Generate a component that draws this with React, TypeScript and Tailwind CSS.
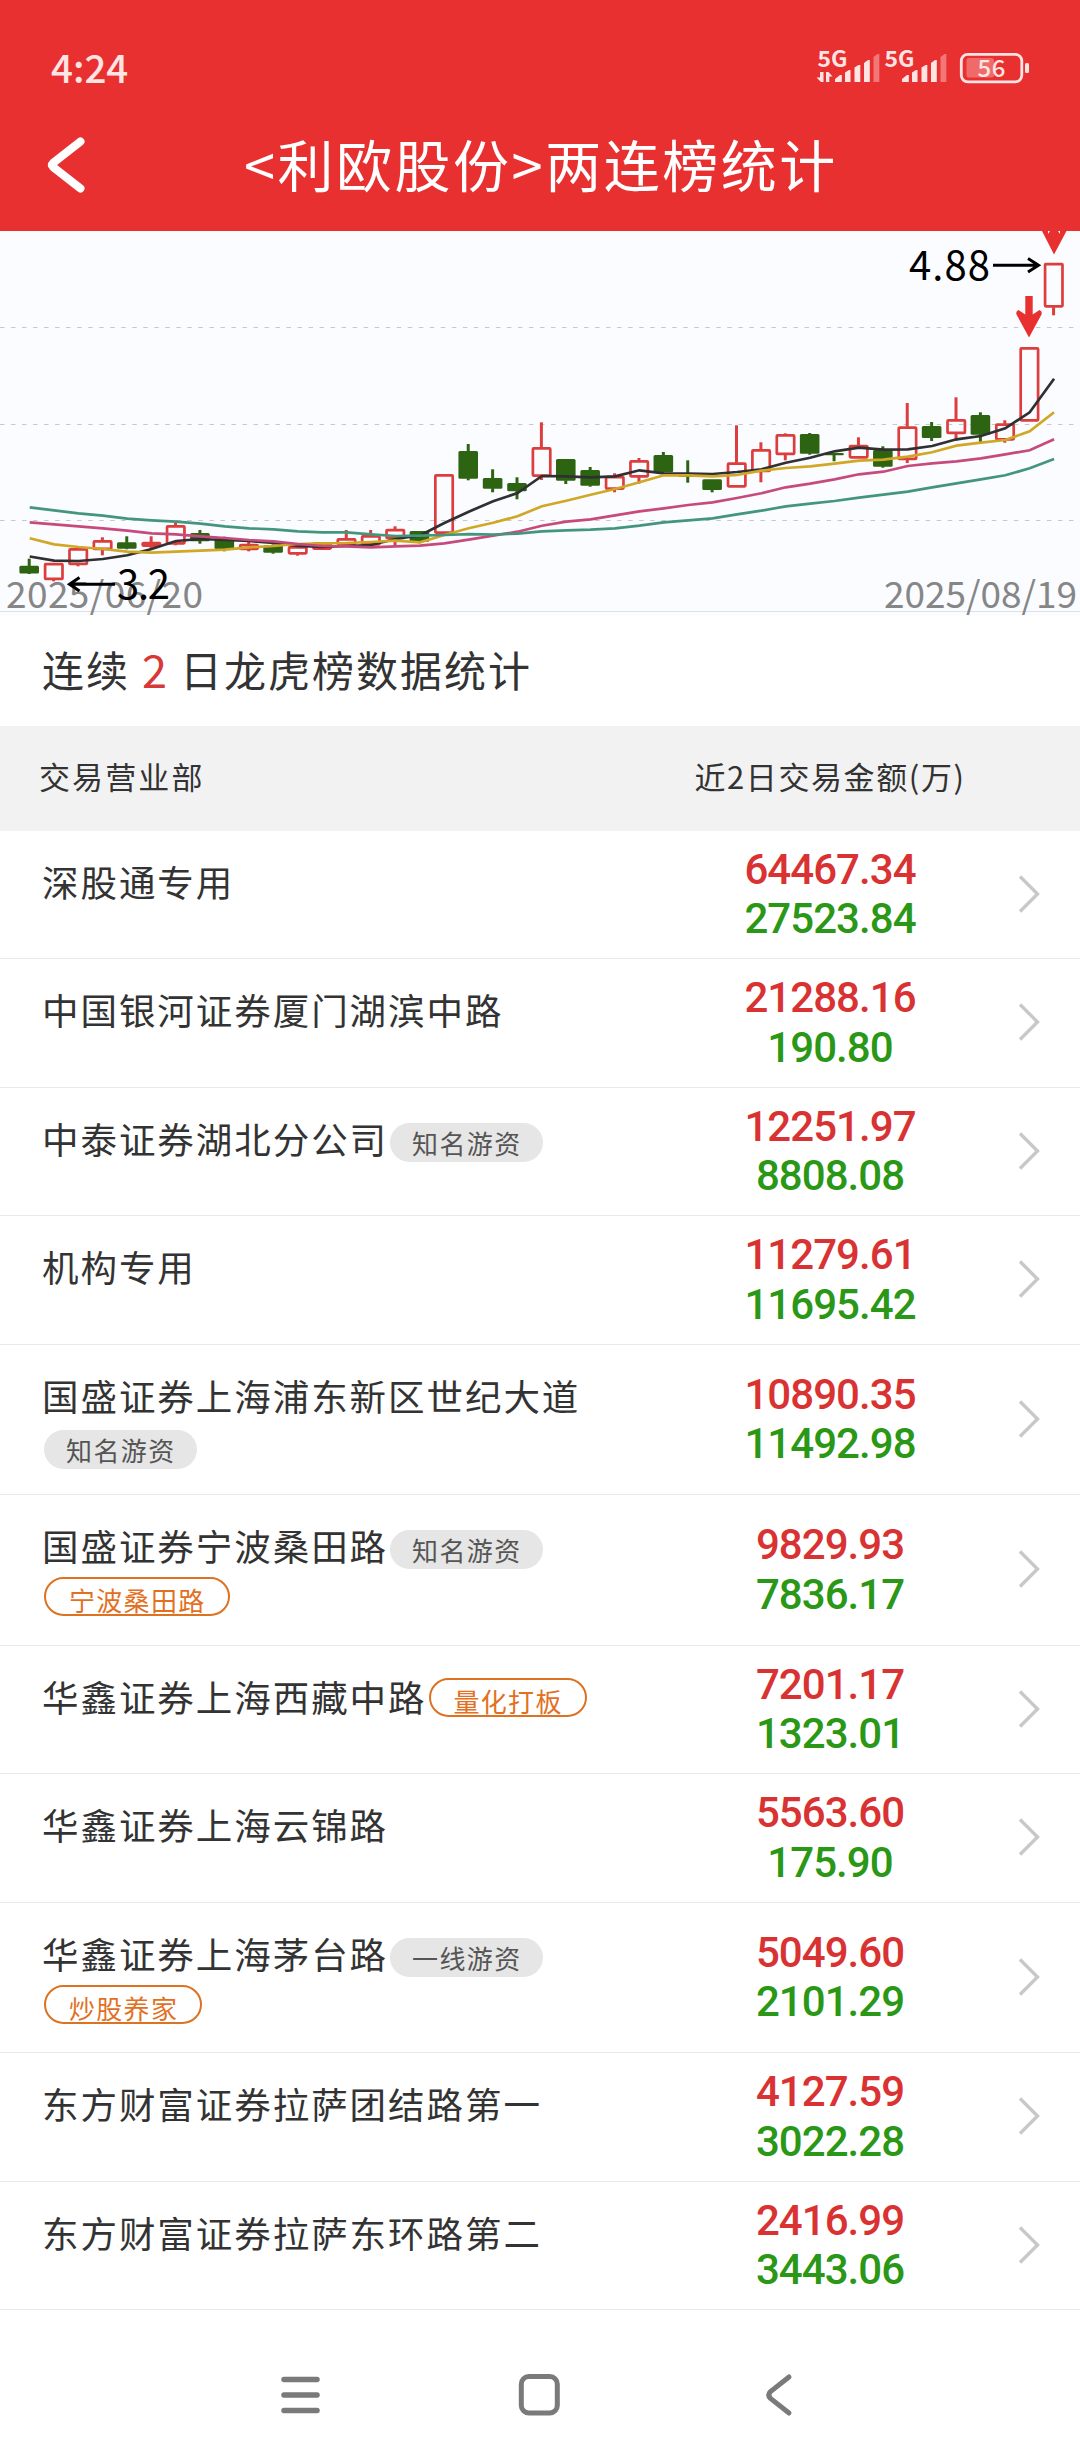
type Tag = { text: string; kind: "gray" | "orange" };
type Row = { name: string; inline?: Tag; below?: Tag; buy: string; sell: string; h: string };

const rows: Row[] = [
  { name: "深股通专用", buy: "64467.34", sell: "27523.84", h: "h-[128px]" },
  { name: "中国银河证券厦门湖滨中路", buy: "21288.16", sell: "190.80", h: "h-[129px]" },
  { name: "中泰证券湖北分公司", inline: { text: "知名游资", kind: "gray" }, buy: "12251.97", sell: "8808.08", h: "h-[128px]" },
  { name: "机构专用", buy: "11279.61", sell: "11695.42", h: "h-[129px]" },
  { name: "国盛证券上海浦东新区世纪大道", below: { text: "知名游资", kind: "gray" }, buy: "10890.35", sell: "11492.98", h: "h-[150px]" },
  { name: "国盛证券宁波桑田路", inline: { text: "知名游资", kind: "gray" }, below: { text: "宁波桑田路", kind: "orange" }, buy: "9829.93", sell: "7836.17", h: "h-[151px]" },
  { name: "华鑫证券上海西藏中路", inline: { text: "量化打板", kind: "orange" }, buy: "7201.17", sell: "1323.01", h: "h-[128px]" },
  { name: "华鑫证券上海云锦路", buy: "5563.60", sell: "175.90", h: "h-[129px]" },
  { name: "华鑫证券上海茅台路", inline: { text: "一线游资", kind: "gray" }, below: { text: "炒股养家", kind: "orange" }, buy: "5049.60", sell: "2101.29", h: "h-[150px]" },
  { name: "东方财富证券拉萨团结路第一", buy: "4127.59", sell: "3022.28", h: "h-[129px]" },
  { name: "东方财富证券拉萨东环路第二", buy: "2416.99", sell: "3443.06", h: "h-[128px]" },
];

// [rising, body top, body bottom, high, low]
const candles: [number, number, number, number, number][] = [
  [0, 565.7, 573.5, 558.7, 574], [1, 562.7, 580.3, 562.7, 581.3], [1, 548, 565.3, 548, 566.3], [1, 540, 550.3, 537.3, 555.3],
  [0, 542.3, 548.7, 536.3, 549.3], [1, 541.7, 547, 536.3, 550], [1, 525, 544.7, 522.3, 545.3], [0, 533, 541.3, 530, 543.7],
  [0, 538, 549, 536.7, 551.3], [1, 543.7, 550.3, 540.7, 551.3], [0, 545.3, 552.7, 544.5, 553.7], [1, 546, 554.7, 546, 555.7],
  [1, 542.3, 550, 542.3, 550], [1, 538, 545.3, 530, 545.3], [1, 535, 545.7, 530, 545.7], [1, 528.7, 539.3, 526.3, 546.7],
  [0, 531, 541.7, 531, 543.3], [1, 474, 534, 474, 534], [0, 451, 478.7, 444, 480.3], [0, 478, 488.7, 469.3, 492.3],
  [0, 483, 491.3, 477.3, 499.3], [1, 447, 477, 422.3, 480], [0, 459, 480.7, 459, 484], [0, 470, 485.7, 467, 486.7],
  [1, 475.7, 490, 473.3, 492.3], [1, 460, 477.7, 458, 483.7], [0, 455, 472.3, 452, 472.3], [0, 474, 476.7, 460.3, 482.7],
  [0, 479.3, 490, 479.3, 492.3], [1, 462.3, 487.7, 425.3, 487.7], [1, 449, 472.3, 442.3, 482.3], [1, 434, 455.3, 433.3, 460.3],
  [0, 434, 453.7, 433, 454.7], [0, 453, 455.3, 453, 461.3], [1, 444.7, 458.7, 437.3, 458.7], [0, 450, 466.7, 446.3, 467.7],
  [1, 426.3, 460.3, 403, 463], [0, 426, 438, 422, 441], [1, 419, 434.3, 397.3, 440.7], [0, 415, 434.7, 412.3, 444],
  [1, 423.3, 440.7, 420.3, 442.7], [1, 347, 421.7, 347, 421.7], [1, 262.7, 307.7, 262.7, 315.3],
];

const averages: { color: string; ys: number[] }[] = [
  { color: "#303033", ys: [556.5, 560.7, 561, 559, 555.3, 549, 541, 539, 540, 541, 543, 546, 547, 546, 545, 539, 535.5, 523, 511.7, 501.3, 493, 476, 476.3, 477.3, 476.3, 470.3, 473.3, 473.7, 474, 472, 469.3, 462.7, 457.7, 451.3, 447.7, 449.7, 449.3, 446, 439.3, 436, 428.3, 412.3, 378.7] },
  { color: "#d0a826", ys: [538.3, 544.3, 547, 549, 551.7, 552.7, 551.7, 550.7, 549.7, 547.3, 546, 544, 543.3, 543, 542, 540.7, 542.3, 535, 528.3, 522.7, 516.3, 506.3, 500.7, 494.7, 489, 482.3, 475.3, 475.3, 476.3, 475, 470.7, 468, 466.3, 463.7, 460.7, 459.7, 456.7, 452.3, 445.7, 442.7, 440, 431.3, 412.3] },
  { color: "#c74a7d", ys: [522.3, 524.3, 526.3, 528.3, 530.7, 533.3, 534.3, 536.3, 538, 540, 541.3, 544, 546, 546.3, 547.3, 546.3, 545.7, 543.3, 539.7, 535.7, 531.7, 525.7, 521.7, 519.3, 515.3, 511.3, 508.3, 505, 502.3, 498, 493.3, 487.3, 483.7, 479.3, 474.3, 471.7, 466, 463.3, 461.3, 458.3, 454.3, 450.3, 439.3] },
  { color: "#43967d", ys: [507.3, 510.3, 513.3, 515.7, 518.7, 520.3, 521.7, 523.7, 526.3, 528.3, 529.3, 531.3, 532.3, 532.3, 534.3, 536, 535.7, 535, 534.2, 534.5, 533.7, 531.3, 530.3, 529.7, 528.3, 525.7, 522.3, 520.3, 518.3, 514.3, 510.7, 506.3, 503.7, 501, 497.7, 494.7, 491.7, 487.3, 483.3, 479.3, 475.3, 468.3, 459] },
];

const cx = (i: number) => 29.2 + 24.39 * i;

function Chart() {
  return (
    <svg className='block h-[385px] w-full bg-[#fbfcff] font-["Noto_Sans_CJK_SC",sans-serif]' viewBox="0 231 1080 385">
      {[327.5, 424.5, 520.5].map((y) => (
        <line key={y} x1="0" x2="1080" y1={y} y2={y} stroke="#c6c8cc" strokeWidth="1.1" strokeDasharray="4.5 6.52" />
      ))}
      <line x1="0" x2="1080" y1="611.5" y2="611.5" stroke="#dfe1e5" />
      <text x="6" y="608" fontSize="37" fill="#868686" textLength="197">2025/06/20</text>
      <text x="884" y="608" fontSize="37" fill="#868686" textLength="193">2025/08/19</text>
      {candles.map(([up, t, b, hi, lo], i) => {
        const x = cx(i);
        const color = up ? "#dc3d3d" : "#2d6412";
        return (
          <g key={i} stroke={color} strokeWidth="3">
            {hi < t && <line x1={x} x2={x} y1={hi} y2={t + 0.5} />}
            {lo > b && <line x1={x} x2={x} y1={b - 0.5} y2={lo} />}
            {up ? (
              <rect x={x - 8.5} y={t + 1.35} width="17.4" height={Math.max(b - t - 2.7, 1)} rx="0.8" fill="none" strokeWidth="2.7" />
            ) : (
              <rect x={x - 9.8} y={t} width="19.6" height={b - t} rx="1.5" fill={color} stroke="none" />
            )}
          </g>
        );
      })}
      {averages.map(({ color, ys }) => (
        <polyline key={color} points={ys.map((y, i) => `${cx(i) + 0.5},${y}`).join(" ")} fill="none" stroke={color} strokeWidth="2.7" />
      ))}
      <g fill="none" stroke="#000" strokeWidth="3">
        <path d="M115 584.3H70M79.500 577.500L69.500 584.300L79.500 591" />
        <path d="M993 265.300H1038M1028 258.500L1038.500 265.300L1028 272" />
      </g>
      <text x="117" y="599" fontSize="40" textLength="53">3.2</text>
      <text x="909" y="280" fontSize="40" textLength="81">4.88</text>
      <g fill="#e93030">
        <path d="M1025.300 296h7.400v18.500l6.800-4.500q3 1.500 2 4.500L1029 337.500L1016.500 314.500q-1-3 2-4.500l6.800 4.500z" />
        <path d="M1042 231h6v3l2-3h8l2 3v-3h6.500L1054 254.500z" />
      </g>
    </svg>
  );
}

function SignalBars({ x }: { x: number }) {
  return (
    <g fill="#ffe4e4">
      <path d={`M${x} 82v-3l5-4h1.800v7z`} />
      <path d={`M${x + 10} 82v-9.500l4-2.500h1.500v12z`} />
      <path d={`M${x + 19.5} 82v-14.500l4-2.500h1.800v17z`} />
      <path d={`M${x + 29} 82v-19l4-3h1.800v22z`} />
      <path d={`M${x + 38.5} 82v-25l4-3h1.800v28z`} opacity="0.4" />
    </g>
  );
}

function StatusIcons() {
  return (
    <svg className='h-[48px] w-[220px] font-["Noto_Sans_CJK_SC",sans-serif]' viewBox="812 44 220 48">
      <text x="817.500" y="66.500" fontSize="22" fontWeight="700" fill="#ffe4e4" textLength="30" lengthAdjust="spacingAndGlyphs">5G</text>
      <text x="884.500" y="66.500" fontSize="22" fontWeight="700" fill="#ffe4e4" textLength="30" lengthAdjust="spacingAndGlyphs">5G</text>
      <path d="M823.500 72v10h-2.500l-4.500-4.500h3.500v-5.500zM826 82v-10h2.500l4 4.500h-3.200v5.500z" fill="#ffe4e4" />
      <SignalBars x={835} />
      <SignalBars x={902} />
      <rect x="961.300" y="54.300" width="60.500" height="27.500" rx="6.500" fill="none" stroke="#ffe4e4" strokeWidth="2.800" />
      <rect x="966.500" y="58" width="27.500" height="19.500" rx="2.500" fill="#f06a6a" />
      <rect x="1025" y="63" width="4" height="10" rx="1.500" fill="#ffe4e4" />
      <text x="977.500" y="77" fontSize="24" fill="#ffe4e4" fontWeight="500" textLength="28">56</text>
    </svg>
  );
}

function Pill({ tag }: { tag: Tag }) {
  return tag.kind === "gray" ? (
    <span className="ml-[2px] mt-[4px] flex h-[39px] items-center rounded-full bg-[#e6e6e6] pl-[22px] pr-[21px] text-[26px] leading-none tracking-[1.4px] text-[#555]">
      <span className="mt-px">{tag.text}</span>
    </span>
  ) : (
    <span className="ml-[2px] mt-[-1px] flex h-[39px] items-center rounded-full border-2 border-[#dd7222] pl-[23px] pr-[22px] text-[26px] leading-none tracking-[1.3px] text-[#e2701f]">
      <span className="mt-[7px]">{tag.text}</span>
    </span>
  );
}

function TableRow({ row }: { row: Row }) {
  return (
    <li className={`flex border-b border-[#e9e9e9] bg-white ${row.h}`}>
      <div className="w-[680px] pl-[42px] pt-[27px]">
        <div className="flex h-[50px] items-center whitespace-nowrap text-[36.5px] leading-none tracking-[1.95px] text-[#333]">
          <span className="-mt-[2px]">{row.name}</span>
          {row.inline && <Pill tag={row.inline} />}
        </div>
        {row.below && (
          <div className="flex h-[50px] items-center">
            <Pill tag={row.below} />
          </div>
        )}
      </div>
      <div className='flex w-[300px] flex-col items-center justify-center pb-px font-["Roboto",sans-serif] text-[42px] font-medium leading-[49.5px] tracking-[-0.95px]'>
        <span className="text-[#d93232]">{row.buy}</span>
        <span className="text-[#2a9716]">{row.sell}</span>
      </div>
      <div className="flex flex-1 items-center pb-[2px] pl-[38px]">
        <svg className="h-[40px] w-[24px]" viewBox="0 0 24 40" fill="none" stroke="#c8c8c8" strokeWidth="3.4">
          <path d="M2 2.500L19.500 20L2 37.500" />
        </svg>
      </div>
    </li>
  );
}

export default function App() {
  return (
    <main className='flex h-[2460px] w-[1080px] flex-col overflow-hidden bg-white font-["Noto_Sans_CJK_SC",sans-serif]'>
      <header className="flex h-[231px] flex-col bg-[#e93030]">
        <div className="mt-[44px] flex h-[48px] items-center justify-between pl-[51px] pr-[48px]">
          <span className="mb-[3px] text-[38.5px] font-medium leading-none text-[#ffe4e4]">4:24</span>
          <StatusIcons />
        </div>
        <div className="mt-[33px] flex h-[80px] items-center">
          <svg className="ml-[42px] h-[60px] w-[46px] shrink-0" viewBox="42 135.500 46 60" fill="none" stroke="#fff" strokeWidth="8" strokeLinecap="round" strokeLinejoin="round">
            <path d="M80.500 142L53 163.500Q51 165.500 53 167.500L80.500 189" />
          </svg>
          <h1 className="-mt-[5px] ml-[156px] whitespace-nowrap text-[56px] font-normal leading-none tracking-[2.5px] text-white">&lt;利欧股份&gt;两连榜统计</h1>
        </div>
      </header>
      <Chart />
      <h2 className="flex h-[110px] items-center whitespace-pre pb-[5px] pl-[42px] text-[42px] font-normal leading-none tracking-[2px] text-[#333]">
        连续<span className="ml-[12px] mr-[11px] text-[45px] text-[#d93838]">2</span>日龙虎榜数据统计
      </h2>
      <div className="flex h-[105px] items-center bg-[#f2f2f2] pb-[6px] text-[31px] leading-none text-[#333]">
        <span className="w-[680px] pl-[39px] tracking-[2.1px]">交易营业部</span>
        <span className="w-[300px] whitespace-nowrap text-center tracking-[1.6px]">近2日交易金额(万)</span>
      </div>
      <ul>
        {rows.map((r) => (
          <TableRow key={r.name} row={r} />
        ))}
      </ul>
      <nav className="flex flex-1 items-center pl-[276px] pt-[20px]">
        <svg className="h-[50px] w-[48px]" viewBox="276 2370 48 50" stroke="#7a7a7a" strokeWidth="5.500" strokeLinecap="round">
          <path d="M284 2379.500H317M284 2395H317M284 2410.500H317" />
        </svg>
        <svg className="ml-[190px] h-[50px] w-[50px]" viewBox="514 2370 50 50" fill="none" stroke="#7a7a7a" strokeWidth="5">
          <rect x="521.300" y="2376.500" width="36" height="36.500" rx="7.500" />
        </svg>
        <svg className="ml-[198px] h-[50px] w-[35px]" viewBox="762 2370 35 50" fill="none" stroke="#7a7a7a" strokeWidth="5" strokeLinecap="round">
          <path d="M789 2377L770.500 2391.500Q767 2395 770.500 2398.500L789 2413" />
        </svg>
      </nav>
    </main>
  );
}
